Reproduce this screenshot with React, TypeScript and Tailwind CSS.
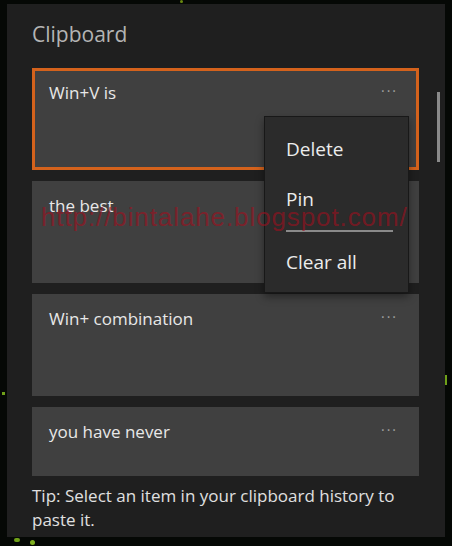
import React from "react";

const font = { fontFamily: '"Open Sans", "Noto Sans", sans-serif' };

function Card({ text, selected }: { text: string; selected?: boolean }) {
  return (
    <div
      className={
        "relative h-[102px] shrink-0 bg-[#404040] " +
        (selected ? "border-[3px] border-[#d4621c]" : "")
      }
    >
      <div
        className={
          "flex items-start justify-between text-[17px] leading-[22px] text-[#e8e8e8] " +
          (selected ? "pl-[14px] pr-[18px] pt-[11px]" : "pl-[17px] pr-[21px] pt-[14px]")
        }
      >
        <span>{text}</span>
        <span className="mt-[-2px] text-[14px] tracking-[2px] text-[#a0a0a0]">···</span>
      </div>
    </div>
  );
}

export default function App() {
  return (
    <div className="relative h-[546px] w-[452px] overflow-hidden bg-[#050805]" style={font}>
      {/* background specks */}
      <div className="absolute left-[180px] top-0 h-[3px] w-[3px] rounded-full bg-[#6a8a10]" />
      <div className="absolute left-[14px] top-[538px] h-[4px] w-[6px] rounded-full bg-[#6fa018]" />
      <div className="absolute left-[30px] top-[540px] h-[5px] w-[5px] rounded-full bg-[#7fb020]" />
      <div className="absolute left-[445px] top-[375px] h-[10px] w-[2px] bg-[#6fa018]" />
      <div className="absolute left-[2px] top-[392px] h-[3px] w-[3px] bg-[#6fa018]" />

      <div className="relative ml-[7px] mt-[4px] flex h-[533px] w-[438px] flex-col bg-[#1f1f1f]">
        <div className="pl-[25px] pt-[15px] text-[21px] leading-[30px] text-[#b4b4b4]">Clipboard</div>

        <div className="relative mt-[19px] flex h-[408px] overflow-hidden">
          <div className="flex w-[412px] flex-col gap-[11px] pl-[25px]">
            <Card text="Win+V is" selected />
            <Card text="the best" />
            <Card text="Win+ combination" />
            <Card text="you have never" />
          </div>
          <div className="ml-[18px] mt-[24px] h-[70px] w-[3px] bg-[#8a8a8a]" />
        </div>

        <div className="pl-[25px] pt-[8px] pr-[20px] text-[17px] leading-[24px] text-[#e0e0e0]">
          Tip: Select an item in your clipboard history to paste it.
        </div>

        {/* context menu */}
        <div className="absolute left-[257px] top-[112px] flex h-[177px] w-[145px] flex-col border border-[#181818] bg-[#2b2b2b] pl-[21px] pr-[17px] text-[19px] text-[#ececec] shadow-[0_4px_8px_rgba(0,0,0,0.4)]">
          <div className="pt-[15px] leading-[34px]">Delete</div>
          <div className="mt-[16px] leading-[34px]">Pin</div>
          <div className="mt-[14px] h-[2px] w-[107px] bg-[#8a8a8a]" />
          <div className="mt-[13px] leading-[34px]">Clear all</div>
        </div>
      </div>

      {/* watermark */}
      <div
        className="pointer-events-none absolute left-[41px] top-[201px] whitespace-nowrap text-[26px] leading-[32px] tracking-[0.9px] text-[rgba(160,15,30,0.62)]"
        style={{ fontFamily: '"Liberation Sans", Arial, sans-serif' }}
      >
        http://bintalahe.blogspot.com/
      </div>
    </div>
  );
}
